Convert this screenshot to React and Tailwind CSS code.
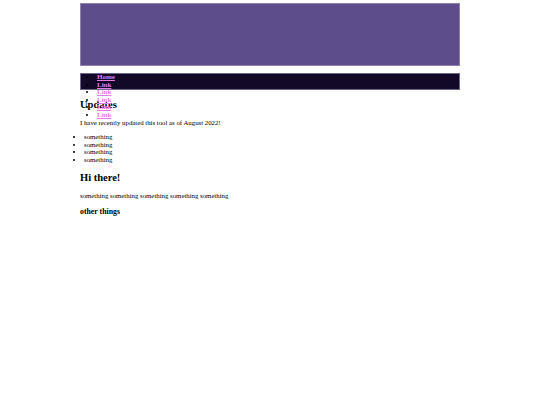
import React from 'react'

const App = () => {
    const navItems = ["Home", "Link", "Link", "Link", "Link", "Link"];
    return (
        <div className="min-h-[405px] bg-white font-['Liberation_Serif',serif] text-black">
            <div className="w-[380px] mx-auto pt-[3px]">
                <header className="h-[63px] bg-[#5e4d8b] border border-[#8e82ad]"></header>

                <nav className="mt-[7px] h-[17px] bg-[#120828] border border-[#6f6787]">
                    <ul className="list-disc pl-[16px] text-[7px] leading-[7.6px] font-bold relative">
                        {navItems.map((item, i) => (
                            <li key={i}>
                                <a href="#" className="underline text-[#e67ae6]">{item}</a>
                            </li>
                        ))}
                    </ul>
                </nav>

                <h2 className="mt-[8px] text-[10.5px] leading-[13px] font-bold">Updates</h2>
                <p className="mt-[7px] text-[6.8px] leading-[9px]">I have recently updated this tool as of August 2022!</p>

                <ul className="mt-[6px] list-disc pl-[4px] text-[6.8px] leading-[7.6px]">
                    <li>something</li>
                    <li>something</li>
                    <li>something</li>
                    <li>something</li>
                </ul>

                <h2 className="mt-[8px] text-[10.5px] leading-[13px] font-bold">Hi there!</h2>
                <p className="mt-[7px] text-[6.8px] leading-[9px]">something something something something something</p>
                <h4 className="mt-[7px] text-[7.8px] leading-[9px] font-bold">other things</h4>
            </div>
        </div>
    )
}

export default App
